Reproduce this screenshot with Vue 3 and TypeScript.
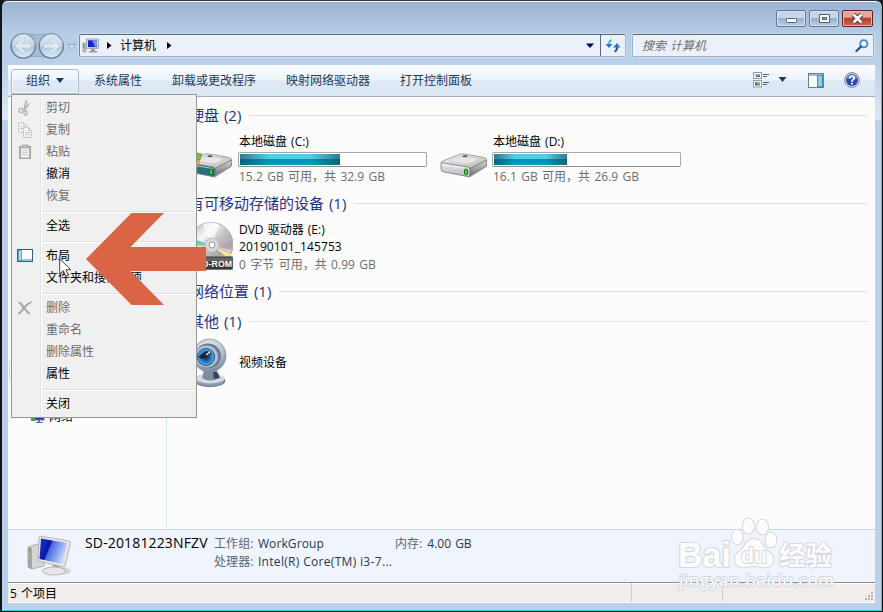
<script setup lang="ts">
interface MenuEntry {
  label?: string
  icon?: string
  disabled?: boolean
  separator?: boolean
}

const commands: string[] = ['系统属性', '卸载或更改程序', '映射网络驱动器', '打开控制面板']

const menu: MenuEntry[] = [
  { label: '剪切', icon: 'cut', disabled: true },
  { label: '复制', icon: 'copy', disabled: true },
  { label: '粘贴', icon: 'paste', disabled: true },
  { label: '撤消' },
  { label: '恢复', disabled: true },
  { separator: true },
  { label: '全选' },
  { separator: true },
  { label: '布局', icon: 'layout' },
  { label: '文件夹和搜索选项' },
  { separator: true },
  { label: '删除', icon: 'delete', disabled: true },
  { label: '重命名', disabled: true },
  { label: '删除属性', disabled: true },
  { label: '属性' },
  { separator: true },
  { label: '关闭' },
]

const disks = [
  { name: '本地磁盘 (C:)', info: '15.2 GB 可用，共 32.9 GB', used: 54, system: true },
  { name: '本地磁盘 (D:)', info: '16.1 GB 可用，共 26.9 GB', used: 39.7, system: false },
]
</script>

<template>
  <div class="window">
    <header class="titlebar">
      <span class="wbtn"><svg width="30" height="17"><rect x="10.500" y="8.500" width="10" height="4" rx="1" fill="#fff" stroke="#566479" /></svg></span>
      <span class="wbtn"><svg width="30" height="17"><path d="M10.500 4.500h10v8h-10z" fill="#fff" stroke="#566479" /><rect x="13.500" y="7.500" width="4" height="2" fill="#8fa9c6" stroke="#566479" /></svg></span>
      <span class="wbtn close"><svg width="31" height="17"><path d="M11.500 4.500l8 8M19.500 4.500l-8 8" stroke="#56343a" stroke-width="4.800" /><path d="M11.500 4.500l8 8M19.500 4.500l-8 8" stroke="#fff" stroke-width="2.800" /></svg></span>
    </header>

    <div class="nav">
      <svg class="backfwd" width="71" height="28" viewBox="0 0 71 28">
        <defs>
          <linearGradient id="orb" x1="0" y1="0" x2="0" y2="1">
            <stop offset="0" stop-color="#dde8f2" /><stop offset=".48" stop-color="#c5d6e7" /><stop offset=".52" stop-color="#b0c7dd" /><stop offset="1" stop-color="#d7ecfa" />
          </linearGradient>
        </defs>
        <path d="M15 1.500Q29 4 43 1.500A12.500 12.500 0 0 1 43 26.500Q29 22 15 26.500A12.500 12.500 0 0 1 15 1.500z" fill="#a3bcd7" stroke="#8ea8c4" />
        <circle cx="15.300" cy="14" r="12" fill="url(#orb)" stroke="#64798f" stroke-width="1.200" />
        <circle cx="43.300" cy="14" r="12" fill="url(#orb)" stroke="#64798f" stroke-width="1.200" />
        <path d="M4 11a12 12 0 0 1 23 0M32 11a12 12 0 0 1 23 0" fill="none" stroke="#eaf2f9" opacity=".6" />
        <path d="M7 14l8-7h3l-5 5h10v4H13l5 5h-3z" fill="#dfeaf3" stroke="#bccfdf" stroke-width=".6" />
        <path d="M52 14l-8-7h-3l5 5H36v4h10l-5 5h3z" fill="#dfeaf3" stroke="#bccfdf" stroke-width=".6" />
        <path d="M60 12.500h7.500L63.800 17z" fill="#d7e4f1" stroke="#8da9c6" />
      </svg>
      <div class="address">
        <svg class="pc-small" width="18" height="16" viewBox="0 0 18 16">
          <rect x="1" y="5" width="3" height="9" fill="#b8bcc0" stroke="#85898d" stroke-width=".5" /><path d="M1.500 6v4" stroke="#3cb82a" stroke-width="1.300" />
          <rect x="4.500" y="1" width="12" height="9.500" fill="#d8dadc" stroke="#96999d" stroke-width=".7" /><rect x="6" y="2.300" width="9" height="6.800" fill="#1526c8" /><path d="M10 2.300h5v6l-2 .8z" fill="#6f91f0" />
          <path d="M9 11h4v2h2v1.500H7V13h2z" fill="#9a9da1" />
        </svg>
        <svg class="crumb" width="5" height="7"><path d="M0 0l4.500 3.500L0 7z" fill="#000" /></svg>
        <span class="here">计算机</span>
        <svg class="crumb" width="5" height="7"><path d="M0 0l4.500 3.500L0 7z" fill="#000" /></svg>
        <svg class="drop" width="8" height="5"><path d="M0 .5h8L4 5z" fill="#000058" /></svg>
        <span class="refresh">
          <svg width="16" height="16" viewBox="0 0 16 16">
            <path d="M6.500 2Q3.800 2.500 4 8" fill="none" stroke="#4cb4e4" stroke-width="2" /><path d="M.5 6h7L4 10z" fill="#2878c8" />
            <path d="M9.500 13.500q2.700-.5 2.500-5.500" fill="none" stroke="#1f4f9f" stroke-width="2" /><path d="M8 9.500h7.500L12 5z" fill="#287ac5" />
          </svg>
        </span>
      </div>
      <div class="search">
        <span>搜索 计算机</span>
        <svg width="14" height="14" viewBox="0 0 14 14"><circle cx="8.800" cy="4.800" r="3.600" fill="#f4faff" stroke="#3c86cc" stroke-width="1.800" /><path d="M6 7.500L1.500 12" stroke="#2458a8" stroke-width="2.400" stroke-linecap="round" /></svg>
      </div>
    </div>

    <div class="client">
      <div class="toolbar">
        <span class="organize">组织<svg width="8" height="5"><path d="M0 0h8L4 5z" fill="#1e395b" /></svg></span>
        <span v-for="c in commands" :key="c" class="cmd">{{ c }}</span>
        <svg class="views" width="34" height="16" viewBox="0 0 34 16">
          <rect x=".5" y=".5" width="8" height="6" fill="#fff" stroke="#8c9cb4" /><path d="M2 2h5v1.500H2z" fill="#73b9dc" /><path d="M3 3.500h4V5H3z" fill="#277047" />
          <rect x=".5" y="8.500" width="8" height="6.500" fill="#fff" stroke="#8c9cb4" /><path d="M2 10h2v2H2z" fill="#3b9b31" /><path d="M4 10h3v2H4z" fill="#d0ac24" /><path d="M2 12h2v1.500H2z" fill="#4660b8" /><path d="M4 12h3v1.500H4z" fill="#c65b39" />
          <path d="M10 2.500h6M10 4.500h4M10 10.500h6M10 12.500h4" stroke="#53667f" />
          <path d="M25.500 5h8l-4 5z" fill="#1e395b" />
        </svg>
        <svg class="preview" width="16" height="15"><rect x=".5" y=".5" width="15" height="14" fill="#fff" stroke="#63809c" /><path d="M1 2h14" stroke="#a4b7c8" stroke-width="2" /><rect x="9.500" y="2.500" width="5" height="11" fill="#87cfe5" stroke="#4a8ca6" /></svg>
        <svg class="help" width="16" height="16" viewBox="0 0 16 16">
          <circle cx="8" cy="8" r="7.400" fill="#dce0e8" stroke="#7c8291" /><circle cx="8" cy="8" r="6" fill="#2946ae" /><path d="M2.500 7a5.600 5.600 0 0 1 11 0z" fill="#5f7cd2" />
          <path d="M5.700 6.300Q5.700 4 8 4t2.300 2Q10.300 7.200 8.800 8 8 8.500 8 9.700" fill="none" stroke="#fff" stroke-width="1.700" /><rect x="7.100" y="10.700" width="1.900" height="1.800" fill="#fff" />
        </svg>
      </div>

      <div class="body">
        <aside class="tree">
          <div class="tree-row focus"></div>
          <div class="tree-row net">
            <svg width="16" height="16" viewBox="0 0 16 16"><rect x="4" y="2" width="10" height="9" fill="#2436bd" stroke="#6e75a3" /><path d="M8 11h2v2h3v1H6v-1h2z" fill="#5e6c98" /><circle cx="3" cy="10" r="2.300" fill="#3b9e59" /></svg>
            网络
          </div>
        </aside>

        <main class="content">
          <h2 class="g1"><span>硬盘 (2)</span></h2>
          <div class="disks">
            <div v-for="d in disks" :key="d.name" class="tile">
              <svg class="icon" width="48" height="30" viewBox="0 0 48 30">
                <defs>
                  <linearGradient id="top" x1="0" y1="0" x2="1" y2="1"><stop offset="0" stop-color="#f8f8f8" /><stop offset="1" stop-color="#b9b9b9" /></linearGradient>
                  <linearGradient id="side" x1="0" y1="0" x2="0" y2="1"><stop offset="0" stop-color="#d6d6d6" /><stop offset="1" stop-color="#6d6d6d" /></linearGradient>
                  <linearGradient id="front" x1="0" y1="0" x2="0" y2="1"><stop offset="0" stop-color="#eeeef2" /><stop offset="1" stop-color="#b4b4bc" /></linearGradient>
                </defs>
                <path d="M4 22l26 7 17-12v-3L28 25z" fill="#000" opacity=".18" />
                <path d="M1 15Q1 12.500 4 11.500L19 5.500Q22 4.500 25 5L44 8.500Q46.500 9.200 46.500 11L30 19.500 2 15.500z" fill="url(#top)" stroke="#8b8b8b" stroke-width=".8" />
                <path d="M30 19.500L46.500 11v5Q46.500 17.500 44.500 18.500L29 27.500z" fill="url(#side)" stroke="#707070" stroke-width=".7" />
                <path d="M1 14.500Q1 13.500 3 13.800L28 18q2 .5 2 2.500v5.500q0 2-2 1.500L4 23Q1 22.300 1 20z" :fill="d.system ? '#28707c' : 'url(#front)'" stroke="#777" stroke-width=".8" />
                <path d="M3 15.500L28 19.500" stroke="#fff" stroke-width=".8" opacity=".8" />
                <path d="M11 12.500Q10 11 13 9.500L24 7 38 9.500Q40 10.500 36 12L29 15z" fill="#e7e7e7" stroke="#c2c2c2" stroke-width=".6" />
                <ellipse cx="25" cy="7.300" rx="2.600" ry="1" fill="#555" />
                <rect x="24.500" y="20" width="3" height="5.500" rx="1" fill="#35d126" stroke="#176014" stroke-width=".8" />
                <g v-if="d.system"><path d="M5 4q6-1 12 1l-2 6q-5-2-10-1z" fill="#85b83c" stroke="#5c8730" stroke-width=".6" /><path d="M6 10.500q5-1 9 1l-2 6q-4-2-8-1.500z" fill="#f0a92e" stroke="#b97a20" stroke-width=".5" /></g>
              </svg>
              <div class="tile-text">
                <div class="name">{{ d.name }}</div>
                <div class="bar"><div class="fill" :style="{ width: d.used + '%' }"></div></div>
                <div class="info">{{ d.info }}</div>
              </div>
            </div>
          </div>

          <h2 class="g2"><span>有可移动存储的设备 (1)</span></h2>
          <div class="tile dvd">
            <svg class="icon" width="48" height="50" viewBox="0 0 48 50">
              <defs><linearGradient id="disc" x1="0" y1="0" x2="1" y2="1"><stop offset="0" stop-color="#b0b0b0" /><stop offset=".32" stop-color="#f7f7f7" /><stop offset=".5" stop-color="#c7c7c7" /><stop offset=".72" stop-color="#a5a5a5" /><stop offset="1" stop-color="#eee" /></linearGradient></defs>
              <circle cx="26" cy="23.500" r="22" fill="url(#disc)" stroke="#a5a5a5" />
              <path d="M26 24L18 3q10-4 17 1z" fill="#fff" opacity=".65" />
              <path d="M26 24l21-8-1 3z" fill="#e0a0d5" opacity=".8" /><path d="M26 24l20 9-3 4z" fill="#f4e694" /><path d="M26 24l20 5v3z" fill="#eec4da" />
              <path d="M26 24L5 17l-1 4z" fill="#49cbdb" /><path d="M26 24L4 21l1 4z" fill="#83d269" />
              <circle cx="27" cy="24" r="7" fill="#d8d8db" stroke="#bbb" /><circle cx="27" cy="24" r="3" fill="#fff" stroke="#999" />
              <rect x="1" y="35.500" width="47" height="13" rx="1.500" fill="#373737" stroke="#777" /><rect x="2" y="36.500" width="45" height="4" fill="#666" />
              <text x="11" y="45.500" font-family="Liberation Sans, sans-serif" font-size="9.500" font-weight="bold" fill="#fff" textLength="36" lengthAdjust="spacingAndGlyphs">CD-ROM</text>
            </svg>
            <div class="tile-text">
              <div class="name">DVD 驱动器 (E:)</div>
              <div class="name second">20190101_145753</div>
              <div class="info">0 字节 可用，共 0.99 GB</div>
            </div>
          </div>

          <h2 class="g3"><span>网络位置 (1)</span></h2>
          <h2 class="g4"><span>其他 (1)</span></h2>
          <div class="tile cam">
            <svg class="icon" width="48" height="50" viewBox="0 0 48 50">
              <defs>
                <radialGradient id="shell" cx=".45" cy=".3" r=".7"><stop offset="0" stop-color="#f3f5f9" /><stop offset=".65" stop-color="#b7c1d0" /><stop offset="1" stop-color="#72829b" /></radialGradient>
                <radialGradient id="lens"><stop offset="0" stop-color="#0d1b34" /><stop offset=".45" stop-color="#2862a3" /><stop offset=".85" stop-color="#4aa0e8" /><stop offset="1" stop-color="#16263d" /></radialGradient>
              </defs>
              <ellipse cx="25" cy="43" rx="15" ry="5.500" fill="#8d9bb1" stroke="#69768c" /><ellipse cx="25" cy="40.500" rx="14.500" ry="5" fill="#d5dbe4" />
              <path d="M19 32h13l2 8q-9 5-17 0z" fill="#7d8ba1" /><path d="M28 33l5 2 2 5-6 1z" fill="#35435b" />
              <circle cx="24.500" cy="17.500" r="16.500" fill="url(#shell)" stroke="#8997ad" stroke-width=".8" />
              <ellipse cx="23" cy="18" rx="13" ry="12.500" fill="#6b7a93" /><ellipse cx="21.500" cy="18.500" rx="11.500" ry="11" fill="#b4bfcf" /><circle cx="21" cy="19" r="9" fill="url(#lens)" />
              <path d="M13 19l8-6 6 2-10 6z" fill="#18263f" /><path d="M21 17l4-3" stroke="#fff" stroke-width="1.200" />
            </svg>
            <div class="name">视频设备</div>
          </div>
        </main>
      </div>

      <section class="details">
        <svg class="pc" width="46" height="42" viewBox="0 0 46 42">
          <defs><linearGradient id="screen" x1="0" y1="0" x2="1" y2=".4"><stop offset="0" stop-color="#2038bd" /><stop offset=".42" stop-color="#0714ae" /><stop offset=".46" stop-color="#4468e4" /><stop offset="1" stop-color="#c4d5f8" /></linearGradient></defs>
          <ellipse cx="34" cy="36" rx="10" ry="3.500" fill="#000" opacity=".13" />
          <path d="M1 12l9-3 7 2v20L5 34l-4-2z" fill="#d5d5d5" stroke="#999" stroke-width=".7" /><path d="M1 12l4 1v21l-4-2z" fill="#a5a5a5" /><path d="M2.500 14v3" stroke="#5c5" stroke-width="1.800" />
          <path d="M26 28l6 1 1 7-8-2z" fill="#aaa" /><ellipse cx="27" cy="36" rx="11.500" ry="4" fill="#e5e5e5" stroke="#aaa" stroke-width=".8" />
          <path d="M12 2.500q0-1.500 2-1.300L42 6q2 .5 1.500 2L38 31q-.5 1.500-2 1L11 26z" fill="#e6e6e8" stroke="#aaa" stroke-width=".8" />
          <path d="M14 3.500L40 8l-4.500 21L12.500 24z" fill="url(#screen)" />
        </svg>
        <div class="host">SD-20181223NFZV</div>
        <div class="facts">
          <div><label>工作组:</label> WorkGroup</div>
          <div class="cpu"><label>处理器:</label> <span>Intel(R) Core(TM) i3-7...</span></div>
        </div>
        <div class="memory"><label>内存:</label> 4.00 GB</div>
      </section>

      <footer class="status">
        <span class="count">5 个项目</span>
        <span class="cell"></span>
        <span class="cell last">
          <svg width="9" height="9"><path d="M6 0h2v2H6zM3 3h2v2H3zM6 3h2v2H6zM0 6h2v2H0zM3 6h2v2H3zM6 6h2v2H6z" fill="#bab4b1" /></svg>
        </span>
      </footer>
    </div>

    <div class="menu">
      <template v-for="(m, i) in menu" :key="i">
        <div v-if="m.separator" class="sep"></div>
        <div v-else class="item" :class="{ off: m.disabled }">
          <span class="gutter">
            <svg v-if="m.icon === 'cut'" width="16" height="16" viewBox="0 0 16 16" fill="none" stroke="#b5b5b5"><path d="M7 10L9.500 0M7.500 10L12 3.500" stroke-width="1.700" /><circle cx="4" cy="10.500" r="2" stroke-width="1.400" /><ellipse cx="8.500" cy="13" rx="1.500" ry="2.300" stroke-width="1.400" /></svg>
            <svg v-else-if="m.icon === 'copy'" width="16" height="16" viewBox="0 0 16 16" fill="#f2f2f2" stroke="#cbcbcb"><path d="M1.500.5h5l3 3v7h-8zM6.500.5v3h3M3 4.500h3M3 6.500h4" /><path d="M6.500 5.500h5l3 3v7h-8zM11.500 5.500v3h3M8 10.500h5M8 12.500h5" /></svg>
            <svg v-else-if="m.icon === 'paste'" width="16" height="16" viewBox="0 0 16 16"><rect x="2.500" y="2.500" width="11" height="12" fill="#b2b2b2" stroke="#a6a6a6" /><rect x="4" y="4" width="8" height="9.500" fill="#f1f1f1" /><path d="M5 6.500h6M5 8.500h6M5 10.500h6" stroke="#d2d2d2" /><rect x="5" y="1" width="6" height="3" fill="#c0c0c0" stroke="#a2a2a2" stroke-width=".7" /></svg>
            <svg v-else-if="m.icon === 'layout'" width="16" height="14"><rect x=".5" y=".5" width="15" height="12" fill="#fff" stroke="#365e82" /><rect x="1.500" y="1.500" width="3" height="10" fill="#a5e1f4" stroke="#66a9c3" /><path d="M5 10h10v2H5z" fill="#95c5da" /></svg>
            <svg v-else-if="m.icon === 'delete'" width="16" height="16" viewBox="0 0 16 16"><path d="M1 2q3-1 6 4 4-4 8-5l.5 1Q12 4 8.500 8q3 4 5 5.500l-1.500 1Q9.500 13 7 9.500q-3 4-4.500 5L.5 13.500Q3 12 5.500 8 3 4 1 2z" fill="#a9a9a9" /></svg>
          </span>
          <span class="label">{{ m.label }}</span>
        </div>
      </template>
    </div>

    <svg class="cursor" width="13" height="20" viewBox="0 0 13 20"><path d="M.7 1v15l3.600-3.400 2.500 5.800 2.600-1.100L7 11.700h4.800z" fill="#fff" stroke="#333" stroke-width=".9" /></svg>
    <svg class="pointer" width="120" height="92"><path d="M0 46L45.500 0H78L44.500 34H120V58H44.500L78 92H45.500z" fill="#d96446" /></svg>

    <svg class="mark" width="162" height="76" viewBox="0 0 162 76">
      <g fill="#fdfdfe" stroke="#d3d7de" stroke-width="2" stroke-linejoin="round" paint-order="stroke">
        <text x="2" y="50.500" font-family="Liberation Sans, sans-serif" font-size="35" font-weight="bold" textLength="53" lengthAdjust="spacingAndGlyphs">Bai</text>
        <ellipse cx="61.500" cy="21" rx="5.500" ry="7.300" /><ellipse cx="72.500" cy="10" rx="5.500" ry="7.500" /><ellipse cx="86.500" cy="11" rx="5.500" ry="7.500" /><ellipse cx="95" cy="24" rx="5.500" ry="7.300" />
        <path d="M78 23q-6 0-9 6-2 4-6 7-5 4-4 9 2 7 10 6 9-2 18 0 9 1 10-6 1-5-4-9-4-3-6-7-3-6-9-6z" />
        <text x="65" y="47" font-family="Liberation Sans, sans-serif" font-size="22" font-weight="bold" textLength="26" lengthAdjust="spacingAndGlyphs">du</text>
        <text x="103" y="49" font-family="Noto Sans CJK SC, sans-serif" font-size="26" font-weight="bold" textLength="53" lengthAdjust="spacingAndGlyphs">经验</text>
        <text x="3" y="70" font-family="Open Sans, sans-serif" font-size="17" textLength="155">jingyan.baidu.com</text>
      </g>
    </svg>
  </div>
</template>

<style>
body { margin: 0; background: #171c22; overflow: hidden; }
</style>

<style scoped>
* { box-sizing: border-box; }
svg { display: block; flex: none; }
.window {
  position: relative; width: 883px; height: 612px; overflow: hidden;
  border: 1px solid #10151c; border-left-width: 2px; border-top-color: #343b46; border-right-color: #111; border-radius: 7px 7px 0 0;
  background: linear-gradient(#9ab2d0 0, #b6cde7 34px, #b9d1ea 65px, #dce8f5 118px, #b9d1ea 120px);
  box-shadow: inset 0 1px #eef5fc, inset -1px -1px #35cbe0;
  padding: 9px 7px 8px 6px;
  font: 12px/18px "Open Sans", "Noto Sans CJK SC", sans-serif; color: #000;
}
.titlebar { display: flex; justify-content: flex-end; gap: 3px; height: 24px; padding-right: 2px; }
.wbtn { width: 30px; height: 17px; border: 1px solid #65788f; border-radius: 2px; box-shadow: inset 0 0 0 1px #d5e3f2; background: linear-gradient(#c5d6e8 0 45%, #97b0cc 50%, #b8cee5); }
.wbtn svg { margin: -1px; }
.wbtn.close { width: 31px; border-color: #5a2028; background: linear-gradient(#e2a69a 0 40%, #b93f29 50%, #ca6553); box-shadow: inset 0 0 0 1px #e8b7ad; }
.nav { display: flex; height: 31px; align-items: flex-start; }
.backfwd { margin-top: -2px; }
.address { display: flex; align-items: center; width: 547px; height: 23px; border: 1px solid #a2afbf; border-top-color: #596673; border-left-color: #768391; border-radius: 2px; background: #eaf1fa; box-shadow: 0 0 0 1px #ccdced; }
.pc-small { margin-left: 2px; }
.crumb { margin-left: 7px; }
.here { margin-left: 8px; }
.here + .crumb { margin-left: 11px; }
.drop { margin-left: auto; }
.refresh { display: flex; align-items: center; justify-content: center; align-self: stretch; width: 25px; margin-left: 6px; border-left: 1px solid #596673; }
.search { display: flex; align-items: center; justify-content: space-between; width: 242px; height: 23px; margin-left: 6px; padding: 0 4px 0 9px; border: 1px solid #a2afbf; border-top-color: #596673; border-radius: 2px; background: #eaf1fa; box-shadow: 0 0 0 1px #ccdced; color: #6d6d6d; font-style: italic; word-spacing: 1px; }
.client { width: 867px; }
.toolbar { display: flex; align-items: center; height: 32px; padding: 0 15px 0 3px; border-top: 1px solid #f9fcff; border-bottom: 1px solid #a0afc3; background: linear-gradient(#fbfdff 0, #edf4fb 45%, #dfe9f5 50%, #dce7f4 100%); color: #1e395b; }
.toolbar svg { position: relative; bottom: 1px; }
.organize { display: flex; align-items: center; gap: 6px; width: 68px; height: 25px; padding-left: 14px; border: 1px solid #a9bcd5; border-radius: 3px; box-shadow: inset 0 0 0 1px #f6faff; }
.cmd { margin-left: 30px; }
.cmd:nth-child(2) { margin-left: 15px; }
.views { margin-left: auto; }
.preview { margin-left: 21px; }
.help { margin-left: 20px; }
.body { display: flex; height: 432px; background: #fcfcfc; }
.tree { width: 159px; padding: 263px 0 0 1px; border-right: 1px solid #d5e3f2; }
.tree-row { height: 22px; }
.tree-row.focus { border: 1px solid #dadada; border-radius: 3px; background: #f8f8f8; }
.tree-row.net { display: flex; align-items: center; gap: 3px; margin-top: 24px; padding-left: 21px; line-height: 22px; }
.content { flex: 1; padding: 8px 7px 0 22px; }
h2 { display: flex; align-items: center; gap: 8px; height: 20px; margin: 0; font-size: 15px; line-height: 20px; font-weight: 400; color: #1e3287; white-space: nowrap; word-spacing: 1px; }
h2::after { content: ""; flex: 1; height: 1px; background: #e2e2e2; }
.disks { display: flex; height: 68px; }
.tile { display: flex; width: 254px; margin-left: -4px; word-spacing: 1px; }
.tile + .tile { margin-left: 0; }
.tile .icon { margin-right: 6px; }
.disks .icon { margin-top: 24px; }
.disks .tile + .tile .icon { margin: 24px 5px 0 1px; }
.tile-text { width: 189px; white-space: nowrap; }
.disks .tile-text { padding-top: 8px; }
.name { line-height: 18px; }
.bar { width: 189px; height: 15px; margin: 1px 0 1px -1px; padding: 1px; border: 1px solid #a9a9a9; border-bottom-color: #8e8e8e; border-radius: 2px; background: #fff; }
.fill { height: 100%; background: linear-gradient(90deg, #05374c88, transparent 30% 70%, #05374c88), linear-gradient(#58cbea 0 45%, #0493b0 50%, #09a0b9); }
.info { color: #6d6d6d; word-spacing: 1.3px; }
.dvd { height: 68px; padding-top: 8px; }
.dvd .second { line-height: 16px; letter-spacing: .1px; }
.dvd .info { line-height: 19px; }
.g4 { margin-top: 10px; }
.cam { padding-top: 7px; }
.cam .name { padding-top: 16px; }
.details { display: flex; height: 53px; border-top: 1px solid #c7d9ea; background: #f0f4fc; color: #1e395b; white-space: nowrap; }
.pc { margin: 5px 0 0 19px; }
.host { width: 129px; padding-top: 4px; margin-left: 12px; font-size: 14px; color: #000; letter-spacing: .15px; }
.facts { width: 181px; padding-top: 5px; letter-spacing: .12px; }
.cpu span { letter-spacing: .32px; }
.memory { padding-top: 5px; word-spacing: 1px; }
label { color: #5a6779; margin-right: 1px; }
.status { display: flex; height: 21px; border-top: 1px solid #8b8b8b; border-bottom: 1px solid #fff; background: #f0edec; box-shadow: inset 0 1px #fff; }
.count { width: 623px; padding: 1px 0 0 2px; line-height: 20px; word-spacing: 1px; }
.cell { width: 91px; border-left: 1px solid #d1cccb; }
.cell.last { display: flex; flex: 1; justify-content: flex-end; align-items: flex-end; padding: 0 1px 1px 0; }
.menu { position: absolute; left: 9px; top: 93px; width: 186px; height: 324px; padding: 2px 2px 1px; border: 1px solid #979797; background: linear-gradient(90deg, transparent 28px, #e2e3e3 28px 29px, #fff 29px 30px, transparent 30px) #f0f0f0; }
.item { display: flex; align-items: center; height: 22px; white-space: nowrap; }
.gutter { width: 32px; padding-left: 3px; }
.item.off { color: #6d6d6d; }
.sep { height: 8px; padding-top: 4px; margin-left: 28px; }
.sep::before { content: ""; display: block; height: 2px; background: linear-gradient(#e0e0e0 50%, #fff 50%); }
.cursor { position: absolute; left: 57px; top: 257px; }
.pointer { position: absolute; left: 84px; top: 212px; }
.mark { position: absolute; left: 674px; top: 515px; }
</style>
